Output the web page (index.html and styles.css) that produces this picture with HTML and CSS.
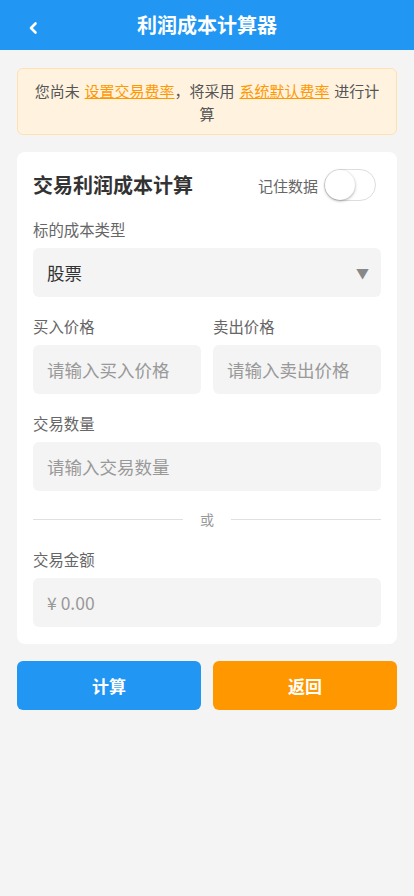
FILE: index.html
```html
<!DOCTYPE html>
<html lang="zh-CN">
<head>
<meta charset="utf-8">
<title>利润成本计算器</title>
<link rel="stylesheet" href="styles.css">
</head>
<body>
<header class="topbar">
  <span class="back"><svg width="10" height="14" viewBox="0 0 10 14"><path d="M7.5 2.5 L3 7 L7.5 11.5" fill="none" stroke="#fff" stroke-width="2.6" stroke-linecap="round" stroke-linejoin="round"/></svg></span>
  <h1 class="title">利润成本计算器</h1>
</header>
<main class="page">
  <div class="notice">您尚未 <a class="link">设置交易费率</a>，将采用 <a class="link">系统默认费率</a> 进行计算</div>
  <section class="card">
    <div class="card-head">
      <h2 class="card-title">交易利润成本计算</h2>
      <div class="remember"><span>记住数据</span><span class="switch"><span class="knob"></span></span></div>
    </div>
    <div class="group">
      <div class="label">标的成本类型</div>
      <div class="field select"><span class="value">股票</span><span class="arrow">▼</span></div>
    </div>
    <div class="row">
      <div class="group">
        <div class="label">买入价格</div>
        <div class="field"><span class="ph">请输入买入价格</span></div>
      </div>
      <div class="group">
        <div class="label">卖出价格</div>
        <div class="field"><span class="ph">请输入卖出价格</span></div>
      </div>
    </div>
    <div class="group">
      <div class="label">交易数量</div>
      <div class="field"><span class="ph">请输入交易数量</span></div>
    </div>
    <div class="divider"><span class="line"></span><span class="or">或</span><span class="line"></span></div>
    <div class="group last">
      <div class="label">交易金额</div>
      <div class="field"><span class="ph">¥ 0.00</span></div>
    </div>
  </section>
  <div class="actions">
    <button class="btn calc">计算</button>
    <button class="btn back-btn">返回</button>
  </div>
</main>
</body>
</html>
```
FILE: styles.css
```css
* { box-sizing: border-box; }
html, body { margin: 0; padding: 0; }
body {
  background: #f4f4f4;
  font-family: "Noto Sans CJK SC", "Noto Sans", "Liberation Sans", sans-serif;
  color: #333;
  width: 414px;
  min-height: 896px;
}
.topbar {
  height: 50px;
  background: #2196f3;
  display: flex;
  align-items: center;
  justify-content: center;
  position: relative;
}
.back {
  position: absolute;
  left: 28px;
  top: 21px;
  width: 10px;
  height: 14px;
  display: flex;
}
.title {
  margin: 0;
  font-size: 20px;
  font-weight: 700;
  color: #fff;
  line-height: 28px;
}
.page { padding: 18px 17px 20px; }
.notice {
  background: #fff3e0;
  border: 1px solid #ffe0b2;
  border-radius: 6px;
  padding: 10px 15px 9px;
  font-size: 15px;
  line-height: 23px;
  color: #555;
  text-align: center;
  word-spacing: 1.5px;
}
.link { color: #ff9800; text-decoration: underline; }
.card {
  margin-top: 17px;
  background: #fff;
  border-radius: 8px;
  padding: 16px 16px 17px;
}
.card-head {
  display: flex;
  align-items: center;
  justify-content: space-between;
  height: 34px;
  margin-bottom: 17px;
}
.card-title {
  margin: 0;
  font-size: 20px;
  font-weight: 700;
  color: #333;
  line-height: 28px;
}
.remember {
  display: flex;
  align-items: center;
  gap: 6px;
  font-size: 15px;
  color: #666;
  margin-right: 5px;
}
.switch {
  width: 52px;
  height: 32px;
  border: 1px solid #ddd;
  border-radius: 16px;
  background: #fff;
  position: relative;
}
.knob {
  position: absolute;
  left: 0;
  top: 0;
  width: 30px;
  height: 30px;
  border-radius: 50%;
  background: #fff;
  box-shadow: 0 1px 3px rgba(0,0,0,0.35);
}
.group { margin-bottom: 19px; }
.group.last { margin-bottom: 0; }
.label {
  font-size: 15.4px;
  line-height: 21px;
  color: #666;
  margin-bottom: 8px;
}
.field {
  height: 49px;
  background: #f4f4f4;
  border-radius: 6px;
  display: flex;
  align-items: center;
  padding: 0 14px;
  font-size: 17.5px;
}
.ph { color: #999; }
.select { justify-content: space-between; }
.value { color: #333; font-size: 17.5px; }
.arrow { color: #888; font-size: 13px; margin-right: -2px; }
.row {
  display: grid;
  grid-template-columns: 1fr 1fr;
  gap: 12px;
}
.divider {
  display: flex;
  align-items: center;
  margin: -1px 0 20px;
  height: 20px;
}
.divider .line { flex: 1; height: 1px; background: #e0e0e0; }
.divider .or { width: 48px; text-align: center; font-size: 14px; color: #999; }
.actions {
  margin-top: 17px;
  display: grid;
  grid-template-columns: 1fr 1fr;
  gap: 12px;
}
.btn {
  height: 49px;
  border: none;
  border-radius: 6px;
  color: #fff;
  font-family: inherit;
  font-size: 17px;
  font-weight: 700;
}
.calc { background: #2196f3; }
.back-btn { background: #ff9800; }
```
